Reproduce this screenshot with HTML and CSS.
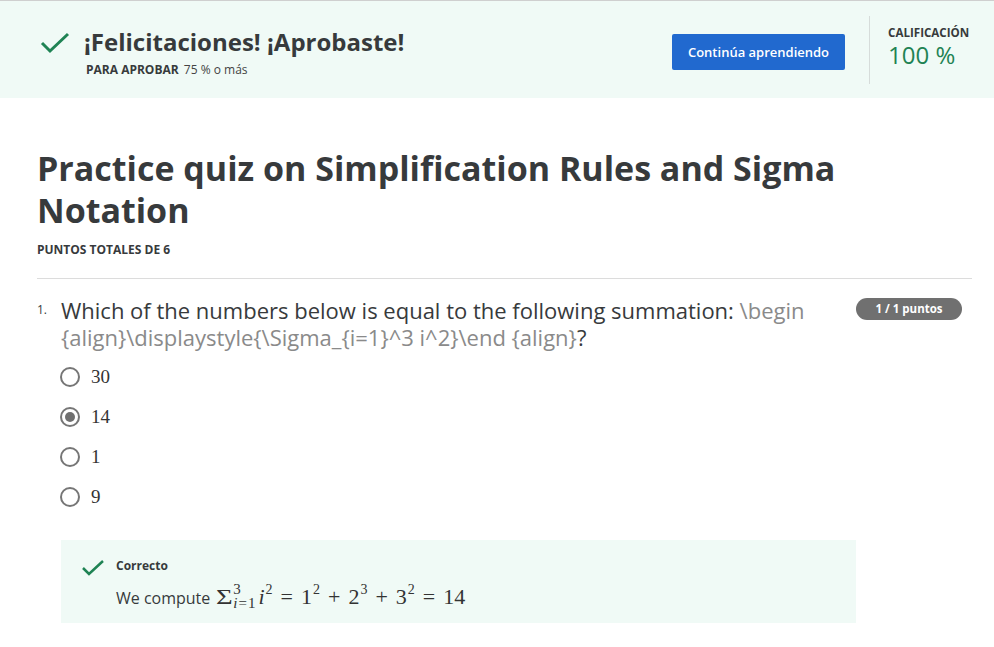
FILE: index.html
```html
<!DOCTYPE html>
<html lang="es">
<head>
<meta charset="utf-8">
<title>Practice quiz</title>
<link rel="stylesheet" href="styles.css">
</head>
<body>
<div class="page">
  <header class="banner">
    <div class="banner-left">
      <svg class="check-lg" width="30" height="22" viewBox="0 0 30 22"><polyline points="2,11 10,19 28,2" fill="none" stroke="#1f8354" stroke-width="3"/></svg>
      <div class="banner-text">
        <div class="congrats">¡Felicitaciones! ¡Aprobaste!</div>
        <div class="pass"><span class="pass-label">PARA APROBAR</span> <span class="pass-val">75 % o más</span></div>
      </div>
    </div>
    <button class="btn">Continúa aprendiendo</button>
    <div class="divider"></div>
    <div class="grade">
      <div class="grade-label">CALIFICACIÓN</div>
      <div class="grade-val">100 %</div>
    </div>
  </header>

  <main class="content">
    <h1 class="title">Practice quiz on Simplification Rules and Sigma Notation</h1>
    <div class="total">PUNTOS TOTALES DE 6</div>
    <hr class="rule">

    <section class="question">
      <div class="q-num">1.</div>
      <div class="q-body">
        <div class="q-text">Which of the numbers below is equal to the following summation: <span class="latex">\begin {align}\displaystyle{\Sigma_{i=1}^3 i^2}\end {align}</span>?</div>
        <ul class="options">
          <li class="option"><span class="radio"></span><span class="opt-label">30</span></li>
          <li class="option"><span class="radio selected"></span><span class="opt-label">14</span></li>
          <li class="option"><span class="radio"></span><span class="opt-label">1</span></li>
          <li class="option"><span class="radio"></span><span class="opt-label">9</span></li>
        </ul>
        <div class="feedback">
          <svg class="check-sm" width="24" height="18" viewBox="0 0 24 18"><polyline points="2,9 8,15 22,2" fill="none" stroke="#1f8354" stroke-width="2.5"/></svg>
          <div class="fb-text">
            <div class="fb-title">Correcto</div>
            <div class="fb-body">We compute <span class="math"><span class="sigma">Σ</span><span class="scripts"><span class="s-sup">3</span><span class="s-sub"><i>i</i><span class="s-eq">=</span>1</span></span><i class="var">i</i><sup>2</sup><span class="op">=</span>1<sup>2</sup><span class="op">+</span>2<sup>3</sup><span class="op">+</span>3<sup>2</sup><span class="op">=</span>14</span></div>
          </div>
        </div>
      </div>
      <div class="badge">1 / 1 puntos</div>
    </section>
  </main>
</div>
</body>
</html>
```

FILE: styles.css
```css
* { box-sizing: border-box; }
html, body { margin: 0; padding: 0; background: #fff; }
body {
  font-family: "Open Sans", "Noto Sans", sans-serif;
  color: #373a3c;
}
.page { border-top: 1px solid #cfcfcf; }

.banner {
  display: flex;
  align-items: flex-start;
  height: 97px;
  background: #f0faf6;
  padding: 0 22px 0 40px;
}
.banner-left {
  flex: 1;
  display: flex;
  align-items: flex-start;
}
.check-lg { margin-top: 31px; flex: none; }
.banner-text { margin-left: 14px; padding-top: 26px; }
.congrats {
  font-size: 24px;
  font-weight: 700;
  line-height: 30px;
  color: #373a3c;
}
.pass { margin-top: 5px; font-size: 12px; line-height: 16px; padding-left: 2px; }
.pass-label { font-weight: 700; margin-right: 2px; }
.pass-val { color: #444; }

.btn {
  margin-top: 33px;
  width: 173px;
  height: 36px;
  border: none;
  border-radius: 2px;
  background: #2169cf;
  color: #fff;
  font-family: "Open Sans", sans-serif;
  font-size: 13px;
  font-weight: 600;
  padding: 0;
}
.divider {
  width: 1px;
  height: 68px;
  margin: 15px 18px 0 24px;
  background: #d6dcda;
}
.grade { padding-top: 24px; width: 84px; }
.grade-label { font-size: 11.6px; font-weight: 700; line-height: 16px; white-space: nowrap; }
.grade-val { font-size: 24px; line-height: 30px; color: #1f8354; margin-top: -1px; }

.content { padding: 0 22px 0 37px; }
.title {
  margin: 49px 0 0;
  font-size: 34px;
  line-height: 42px;
  font-weight: 700;
  color: #373a3c;
  max-width: 860px;
}
.total {
  margin-top: 11px;
  font-size: 12px;
  font-weight: 700;
  line-height: 16px;
}
.rule {
  margin: 20px 0 0;
  border: none;
  border-top: 1px solid #dcdcdc;
}

.question {
  display: flex;
  align-items: flex-start;
  padding-top: 18px;
}
.q-num { width: 24px; font-size: 12px; line-height: 26px; flex: none; }
.q-body { width: 795px; flex: none; }
.q-text { font-size: 22px; line-height: 27px; color: #373a3c; max-width: 780px; }
.latex { color: #8a8a8a; }
.badge {
  margin-left: auto;
  margin-right: 10px;
  margin-top: 1px;
  width: 106px;
  height: 22px;
  border-radius: 11px;
  background: #707070;
  color: #fff;
  font-size: 11.5px;
  font-weight: 700;
  line-height: 22px;
  text-align: center;
}

.options { list-style: none; margin: 6px 0 0; padding: 0; }
.option { display: flex; align-items: center; height: 40px; margin-left: -1px; }
.radio {
  width: 20px;
  height: 20px;
  border-radius: 50%;
  border: 2px solid #767676;
  display: flex;
  align-items: center;
  justify-content: center;
  flex: none;
}
.radio.selected::after {
  content: "";
  width: 10px;
  height: 10px;
  border-radius: 50%;
  background: #6f6f6f;
}
.opt-label {
  margin-left: 11px;
  font-family: "Liberation Serif", "DejaVu Serif", serif;
  font-size: 19px;
  color: #333;
}

.feedback {
  margin-top: 23px;
  background: #f0faf6;
  display: flex;
  align-items: flex-start;
  height: 83px;
  padding: 18px 20px 0 20px;
}
.check-sm { margin-top: 1px; flex: none; }
.fb-text { margin-left: 11px; }
.fb-title { font-size: 12px; font-weight: 700; line-height: 16px; }
.fb-body { font-size: 16px; line-height: 30px; height: 30px; margin-top: 8px; white-space: nowrap; }
.math {
  font-family: "Liberation Serif", "DejaVu Serif", serif;
  font-size: 22px;
  color: #333;
}
.math sup { font-size: 14px; vertical-align: 10px; line-height: 0; margin-left: 1px; }
.sigma {
  display: inline-block;
  font-size: 22px;
  transform: scaleX(1.3);
  transform-origin: left center;
  margin-left: 2px;
  margin-right: 4px;
}
.scripts {
  display: inline-flex;
  flex-direction: column;
  vertical-align: 10px;
  line-height: 14px;
  font-size: 15px;
  margin: 0 2px 0 0;
}
.s-eq { margin: 0 1px; }
.var { margin-left: 1px; }
.op { margin: 0 8px; }
```
